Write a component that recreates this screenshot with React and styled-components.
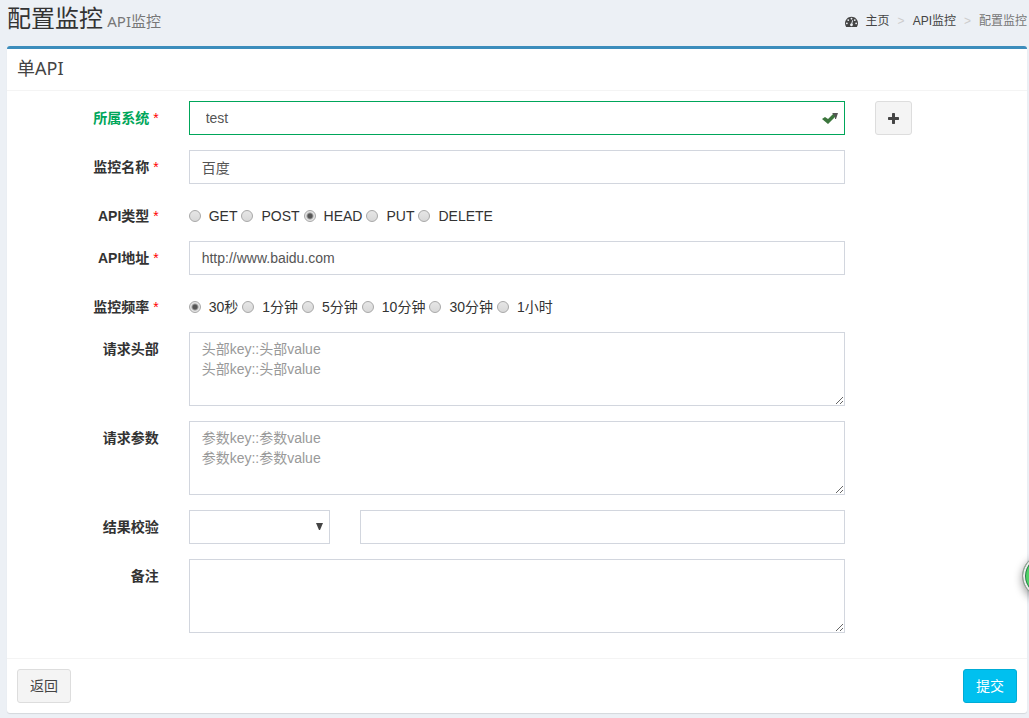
import { useState } from "react";
import styled, { createGlobalStyle } from "styled-components";

const apiTypes = ["GET", "POST", "HEAD", "PUT", "DELETE"];
const frequencies = ["30秒", "1分钟", "5分钟", "10分钟", "30分钟", "1小时"];

function RadioGroup(props) {
  const [value, setValue] = useState(props.initial);

  return (
    <Radios role="radiogroup" aria-labelledby={props.labelledBy}>
      {props.options.map((option) => (
        <RadioLabel key={option}>
          <Radio
            type="radio"
            name={props.name}
            value={option}
            checked={value === option}
            onChange={() => setValue(option)}
          />
          {option}
        </RadioLabel>
      ))}
    </Radios>
  );
}

function DashboardIcon() {
  return (
    <svg width="13" height="13" viewBox="0 0 1792 1792" fill="currentColor" aria-hidden="true">
      <path d="M384 1152q0-53-37.5-90.5t-90.5-37.5-90.5 37.5-37.5 90.5 37.5 90.5 90.5 37.5 90.5-37.5 37.5-90.5zm192-448q0-53-37.5-90.5t-90.5-37.5-90.5 37.5-37.5 90.5 37.5 90.5 90.5 37.5 90.5-37.5 37.5-90.5zm428 481l101-382q6-26-7.5-48.5t-38.5-29.5-48 6.5-30 39.5l-101 382q-60 5-107 43.5t-63 98.5q-20 77 20 146t117 89 146-20 89-117q16-60-6-117t-72-91zm660-33q0-53-37.5-90.5t-90.5-37.5-90.5 37.5-37.5 90.5 37.5 90.5 90.5 37.5 90.5-37.5 37.5-90.5zm-640-640q0-53-37.5-90.5t-90.5-37.5-90.5 37.5-37.5 90.5 37.5 90.5 90.5 37.5 90.5-37.5 37.5-90.5zm448 192q0-53-37.5-90.5t-90.5-37.5-90.5 37.5-37.5 90.5 37.5 90.5 90.5 37.5 90.5-37.5 37.5-90.5zm320 448q0 261-141 483-19 29-54 29h-1402q-35 0-54-29-141-221-141-483 0-182 71-348t191-286 286-191 348-71 348 71 286 191 191 286 71 348z" />
    </svg>
  );
}

function PlusIcon() {
  return (
    <svg width="11" height="11" viewBox="192 128 1408 1408" fill="currentColor" aria-hidden="true">
      <path d="M1600 736v192q0 40-28 68t-68 28h-416v416q0 40-28 68t-68 28h-192q-40 0-68-28t-28-68v-416h-416q-40 0-68-28t-28-68v-192q0-40 28-68t68-28h416v-416q0-40 28-68t68-28h192q40 0 68 28t28 68v416h416q40 0 68 28t28 68z" />
    </svg>
  );
}

function App() {
  return (
    <Page>
      <GlobalStyle />
      <Header>
        <Title>
          配置监控 <small>API监控</small>
        </Title>
        <Breadcrumb aria-label="breadcrumb">
          <a href="#home">
            <DashboardIcon />
            主页
          </a>
          <Separator>&gt;</Separator>
          <a href="#api">API监控</a>
          <Separator>&gt;</Separator>
          <span>配置监控</span>
        </Breadcrumb>
      </Header>

      <Box onSubmit={(e) => e.preventDefault()}>
        <BoxHeader>单API</BoxHeader>

        <BoxBody>
          <Row>
            <Label htmlFor="system" $success>
              所属系统 <Required>*</Required>
            </Label>
            <Col $span={8}>
              <SelectWrapper>
                <SystemSelect id="system" defaultValue="test">
                  <option>test</option>
                </SystemSelect>
                <Feedback width="18" height="14" viewBox="0 0 18 14" aria-hidden="true">
                  <path d="M1 8l3-2 3 2 6-6 3 2-9 9z" fill="#3c763d" />
                  <path d="M11 2h6l-2 6h-1v-3z" fill="#555" />
                </Feedback>
              </SelectWrapper>
            </Col>
            <Col $span={2}>
              <Button type="button" aria-label="add">
                <PlusIcon />
              </Button>
            </Col>
          </Row>

          <Row>
            <Label htmlFor="name">
              监控名称 <Required>*</Required>
            </Label>
            <Col $span={8}>
              <Input id="name" type="text" defaultValue="百度" />
            </Col>
          </Row>

          <Row>
            <Label as="div" id="type-label">
              API类型 <Required>*</Required>
            </Label>
            <Col $span={8}>
              <RadioGroup name="type" labelledBy="type-label" options={apiTypes} initial="HEAD" />
            </Col>
          </Row>

          <Row>
            <Label htmlFor="url">
              API地址 <Required>*</Required>
            </Label>
            <Col $span={8}>
              <Input id="url" type="text" defaultValue="http://www.baidu.com" />
            </Col>
          </Row>

          <Row>
            <Label as="div" id="frequency-label">
              监控频率 <Required>*</Required>
            </Label>
            <Col $span={8}>
              <RadioGroup
                name="frequency"
                labelledBy="frequency-label"
                options={frequencies}
                initial="30秒"
              />
            </Col>
          </Row>

          <Row>
            <Label htmlFor="headers">请求头部</Label>
            <Col $span={8}>
              <TextArea id="headers" rows={3} placeholder={"头部key::头部value\n头部key::头部value"} />
            </Col>
          </Row>

          <Row>
            <Label htmlFor="params">请求参数</Label>
            <Col $span={8}>
              <TextArea id="params" rows={3} placeholder={"参数key::参数value\n参数key::参数value"} />
            </Col>
          </Row>

          <Row>
            <Label htmlFor="check">结果校验</Label>
            <Col $span={2}>
              <SelectWrapper>
                <Select id="check" />
                <Arrow width="7" height="7" viewBox="0 0 7 7" aria-hidden="true">
                  <path d="M0 0h7l-3 7h-1z" fill="#444" />
                </Arrow>
              </SelectWrapper>
            </Col>
            <Col $span={6}>
              <Input type="text" aria-label="结果校验" />
            </Col>
          </Row>

          <Row>
            <Label htmlFor="remark">备注</Label>
            <Col $span={8}>
              <TextArea id="remark" rows={3} />
            </Col>
          </Row>
        </BoxBody>

        <BoxFooter>
          <Button type="button">返回</Button>
          <Button type="submit" $primary>
            提交
          </Button>
        </BoxFooter>
      </Box>
      <FloatingBall />
    </Page>
  );
}

export default App;

const GlobalStyle = createGlobalStyle`
  * {
    box-sizing: border-box;
  }

  body {
    margin: 0;
    background: #ecf0f5;
    color: #333;
    font-family: "Liberation Sans", "Noto Sans CJK SC", sans-serif;
    font-size: 14px;
    line-height: 20px;
    overflow-x: hidden;
  }

  input, select, textarea, button {
    font: inherit;
  }
`;

const Page = styled.main`
  padding: 5px 2px 5px 7px;
`;

const Header = styled.header`
  display: flex;
  justify-content: space-between;
  align-items: flex-end;
  height: 26px;
  margin-bottom: 15px;
`;

const Title = styled.h1`
  margin: 0;
  font-family: "Noto Sans", "Noto Sans CJK SC", sans-serif;
  font-size: 24px;
  line-height: 26px;
  font-weight: 400;

  small {
    font-size: 15px;
    line-height: 15px;
    color: #777;
    margin-left: -2px;
  }
`;

const Breadcrumb = styled.nav`
  display: flex;
  align-items: center;
  font-size: 12px;
  color: #777;

  a {
    display: flex;
    align-items: center;
    gap: 8px;
    color: #444;
    text-decoration: none;
  }
`;

const Separator = styled.span`
  padding: 0 8px;
  color: #ccc;
`;

const Box = styled.form`
  background: #fff;
  border-top: 3px solid #3c8dbc;
  border-radius: 3px;
  box-shadow: 0 1px 1px rgba(0, 0, 0, 0.1);
`;

const BoxHeader = styled.h2`
  margin: 0;
  padding: 9px 10px 11px;
  border-bottom: 1px solid #f4f4f4;
  color: #444;
  font-family: "Noto Sans", "Noto Sans CJK SC", sans-serif;
  font-size: 18px;
  line-height: 21px;
  font-weight: 400;
`;

const BoxBody = styled.div`
  padding: 10px;
`;

const Row = styled.div`
  display: flex;
  margin: 0 -15px 15px;
`;

const Col = styled.div`
  flex: 0 0 calc(100% * ${(props) => props.$span} / 12);
  min-width: 0;
  padding: 0 15px;
`;

const Label = styled.label`
  flex: 0 0 calc(100% / 6);
  padding: 7px 15px 0;
  color: ${(props) => (props.$success ? "#00a65a" : "#333")};
  font-weight: 700;
  text-align: right;
`;

const Required = styled.span`
  color: #f00;
  font-weight: 400;
`;

const Input = styled.input`
  display: block;
  width: 100%;
  height: 34px;
  padding: 6px 12px;
  border: 1px solid #d2d6de;
  border-radius: 0;
  background: #fff;
  color: #555;
`;

const TextArea = styled.textarea`
  display: block;
  width: 100%;
  padding: 6px 12px;
  border: 1px solid #d2d6de;
  border-radius: 0;
  background: #fff;
  color: #555;
  resize: vertical;

  &::placeholder {
    color: #999;
  }
`;

const SelectWrapper = styled.div`
  position: relative;
`;

const Select = styled.select`
  display: block;
  width: 100%;
  height: 34px;
  padding: 6px 12px;
  border: 1px solid #d2d6de;
  border-radius: 0;
  background: #fff;
  color: #555;
  appearance: none;
`;

const SystemSelect = styled(Select)`
  padding: 6px 16px;
  border-color: #00a65a;
`;

const Feedback = styled.svg`
  position: absolute;
  top: 10px;
  right: 6px;
  pointer-events: none;
`;

const Arrow = styled.svg`
  position: absolute;
  top: 13px;
  right: 7px;
  pointer-events: none;
`;

const Radios = styled.div`
  display: flex;
  flex-wrap: wrap;
  gap: 4px;
  padding-top: 7px;
`;

const RadioLabel = styled.label`
  display: flex;
  align-items: center;
  gap: 8px;
`;

const Radio = styled.input`
  width: 12px;
  height: 12px;
  margin: 0;
  border: 1px solid #a8a8a8;
  border-radius: 50%;
  background: ${(props) =>
    props.checked
      ? "radial-gradient(circle, #555 0 2px, #e4e4e4 4px)"
      : "linear-gradient(#e6e6e6, #d8d8d8)"};
  appearance: none;
`;

const Button = styled.button`
  display: inline-flex;
  align-items: center;
  height: 34px;
  padding: 6px 12px;
  border: 1px solid ${(props) => (props.$primary ? "#00acd6" : "#ddd")};
  border-radius: 3px;
  background: ${(props) => (props.$primary ? "#00c0ef" : "#f4f4f4")};
  color: ${(props) => (props.$primary ? "#fff" : "#444")};
  cursor: pointer;
`;

const BoxFooter = styled.footer`
  display: flex;
  justify-content: space-between;
  padding: 10px;
  border-top: 1px solid #f4f4f4;
`;

const FloatingBall = styled.div`
  position: fixed;
  top: 554px;
  right: -37px;
  width: 44px;
  height: 44px;
  border: 1px solid #999;
  border-radius: 50%;
  background: #4fd266;
  box-shadow: inset 0 0 0 2px #eee, inset 0 0 0 3px #2a7a4a, 0 3px 8px rgba(0, 0, 0, 0.4);
`;
